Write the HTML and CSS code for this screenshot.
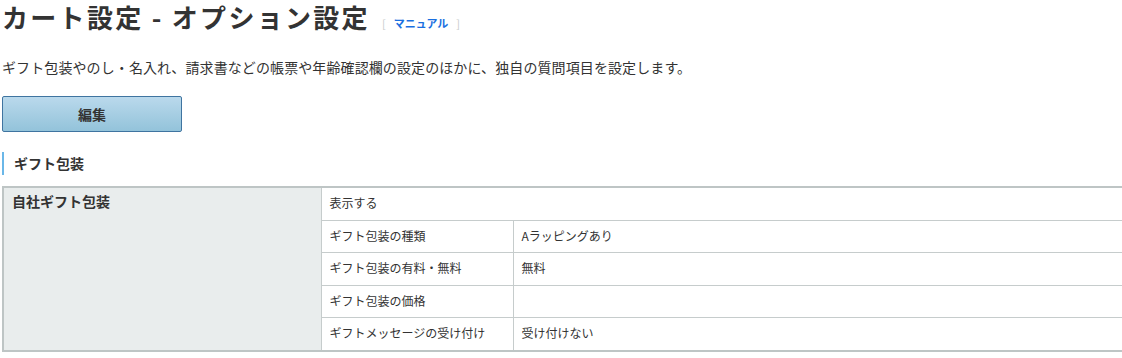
FILE: index.html
```html
<!DOCTYPE html>
<html lang="ja">
<head>
<meta charset="utf-8">
<title>カート設定 - オプション設定</title>
<link rel="stylesheet" href="styles.css">
</head>
<body>
<div class="page">
  <div class="title-row">
    <h1 class="title">カート設定 - オプション設定</h1>
    <span class="manual"><span class="br">[</span><a class="manual-link" href="#">マニュアル</a><span class="br">]</span></span>
  </div>
  <p class="desc">ギフト包装やのし・名入れ、請求書などの帳票や年齢確認欄の設定のほかに、独自の質問項目を設定します。</p>
  <button class="edit-btn" type="button">編集</button>
  <h2 class="section">ギフト包装</h2>
  <table class="opt">
    <colgroup>
      <col class="c-head">
      <col class="c-label">
      <col>
    </colgroup>
    <tr>
      <th class="head" rowspan="5">自社ギフト包装</th>
      <td class="cell" colspan="2">表示する</td>
    </tr>
    <tr><td class="cell label">ギフト包装の種類</td><td class="cell">Aラッピングあり</td></tr>
    <tr><td class="cell label">ギフト包装の有料・無料</td><td class="cell">無料</td></tr>
    <tr><td class="cell label">ギフト包装の価格</td><td class="cell"></td></tr>
    <tr><td class="cell label">ギフトメッセージの受け付け</td><td class="cell">受け付けない</td></tr>
  </table>
</div>
</body>
</html>
```

FILE: styles.css
```css
html, body {
  margin: 0;
  padding: 0;
  background: #fff;
  overflow: hidden;
}
body {
  font-family: "Noto Sans CJK JP", "Noto Sans", sans-serif;
  color: #333;
}
.page {
  padding: 0 0 0 2px;
}
.title-row {
  display: flex;
  align-items: baseline;
  gap: 12px;
  height: 36px;
}
.title {
  margin: 0;
  font-size: 26px;
  font-weight: 700;
  line-height: 34px;
  letter-spacing: 2.3px;
  color: #333;
}
.manual {
  font-size: 11px;
  font-weight: 700;
  display: inline-flex;
  gap: 8px;
}
.br {
  color: #c8cccc;
  font-weight: 400;
}
.manual-link {
  color: #1a6fe0;
  text-decoration: none;
}
.desc {
  margin: 20px 0 0;
  font-size: 14px;
  line-height: 22px;
  letter-spacing: 0.1px;
}
.edit-btn {
  display: block;
  margin: 18px 0 0;
  width: 180px;
  height: 36px;
  border: 1px solid #3f74a0;
  border-radius: 2px;
  background: linear-gradient(#bad9ec, #93c3da);
  font-family: inherit;
  font-size: 14px;
  font-weight: 700;
  color: #333;
  padding: 0;
}
.section {
  margin: 20px 0 0;
  border-left: 2px solid #6ab7e8;
  padding-left: 10px;
  font-size: 14px;
  font-weight: 700;
  line-height: 23px;
}
.opt {
  margin-top: 11px;
  width: 1124px;
  table-layout: fixed;
  border-collapse: collapse;
  border-top: 2px solid #bec5c5;
  border-bottom: 2px solid #bec5c5;
  border-left: 2px solid #bec5c5;
  font-size: 12px;
}
.c-head {
  width: 318px;
}
.c-label {
  width: 192px;
}
.head {
  background: #e9eded;
  border-right: 1px solid #c6cccc;
  text-align: left;
  vertical-align: top;
  font-size: 14px;
  font-weight: 700;
  padding: 3px 8px;
  line-height: 20px;
}
.cell {
  padding: 0 8px 2px;
  border-bottom: 1px solid #c6cccc;
  line-height: 16px;
}
.opt tr:nth-child(odd) .cell {
  height: 30px;
}
.opt tr:nth-child(even) .cell {
  height: 29px;
}
.opt tr:last-child .cell {
  border-bottom: none;
}
.label {
  border-right: 1px solid #c6cccc;
}
```
